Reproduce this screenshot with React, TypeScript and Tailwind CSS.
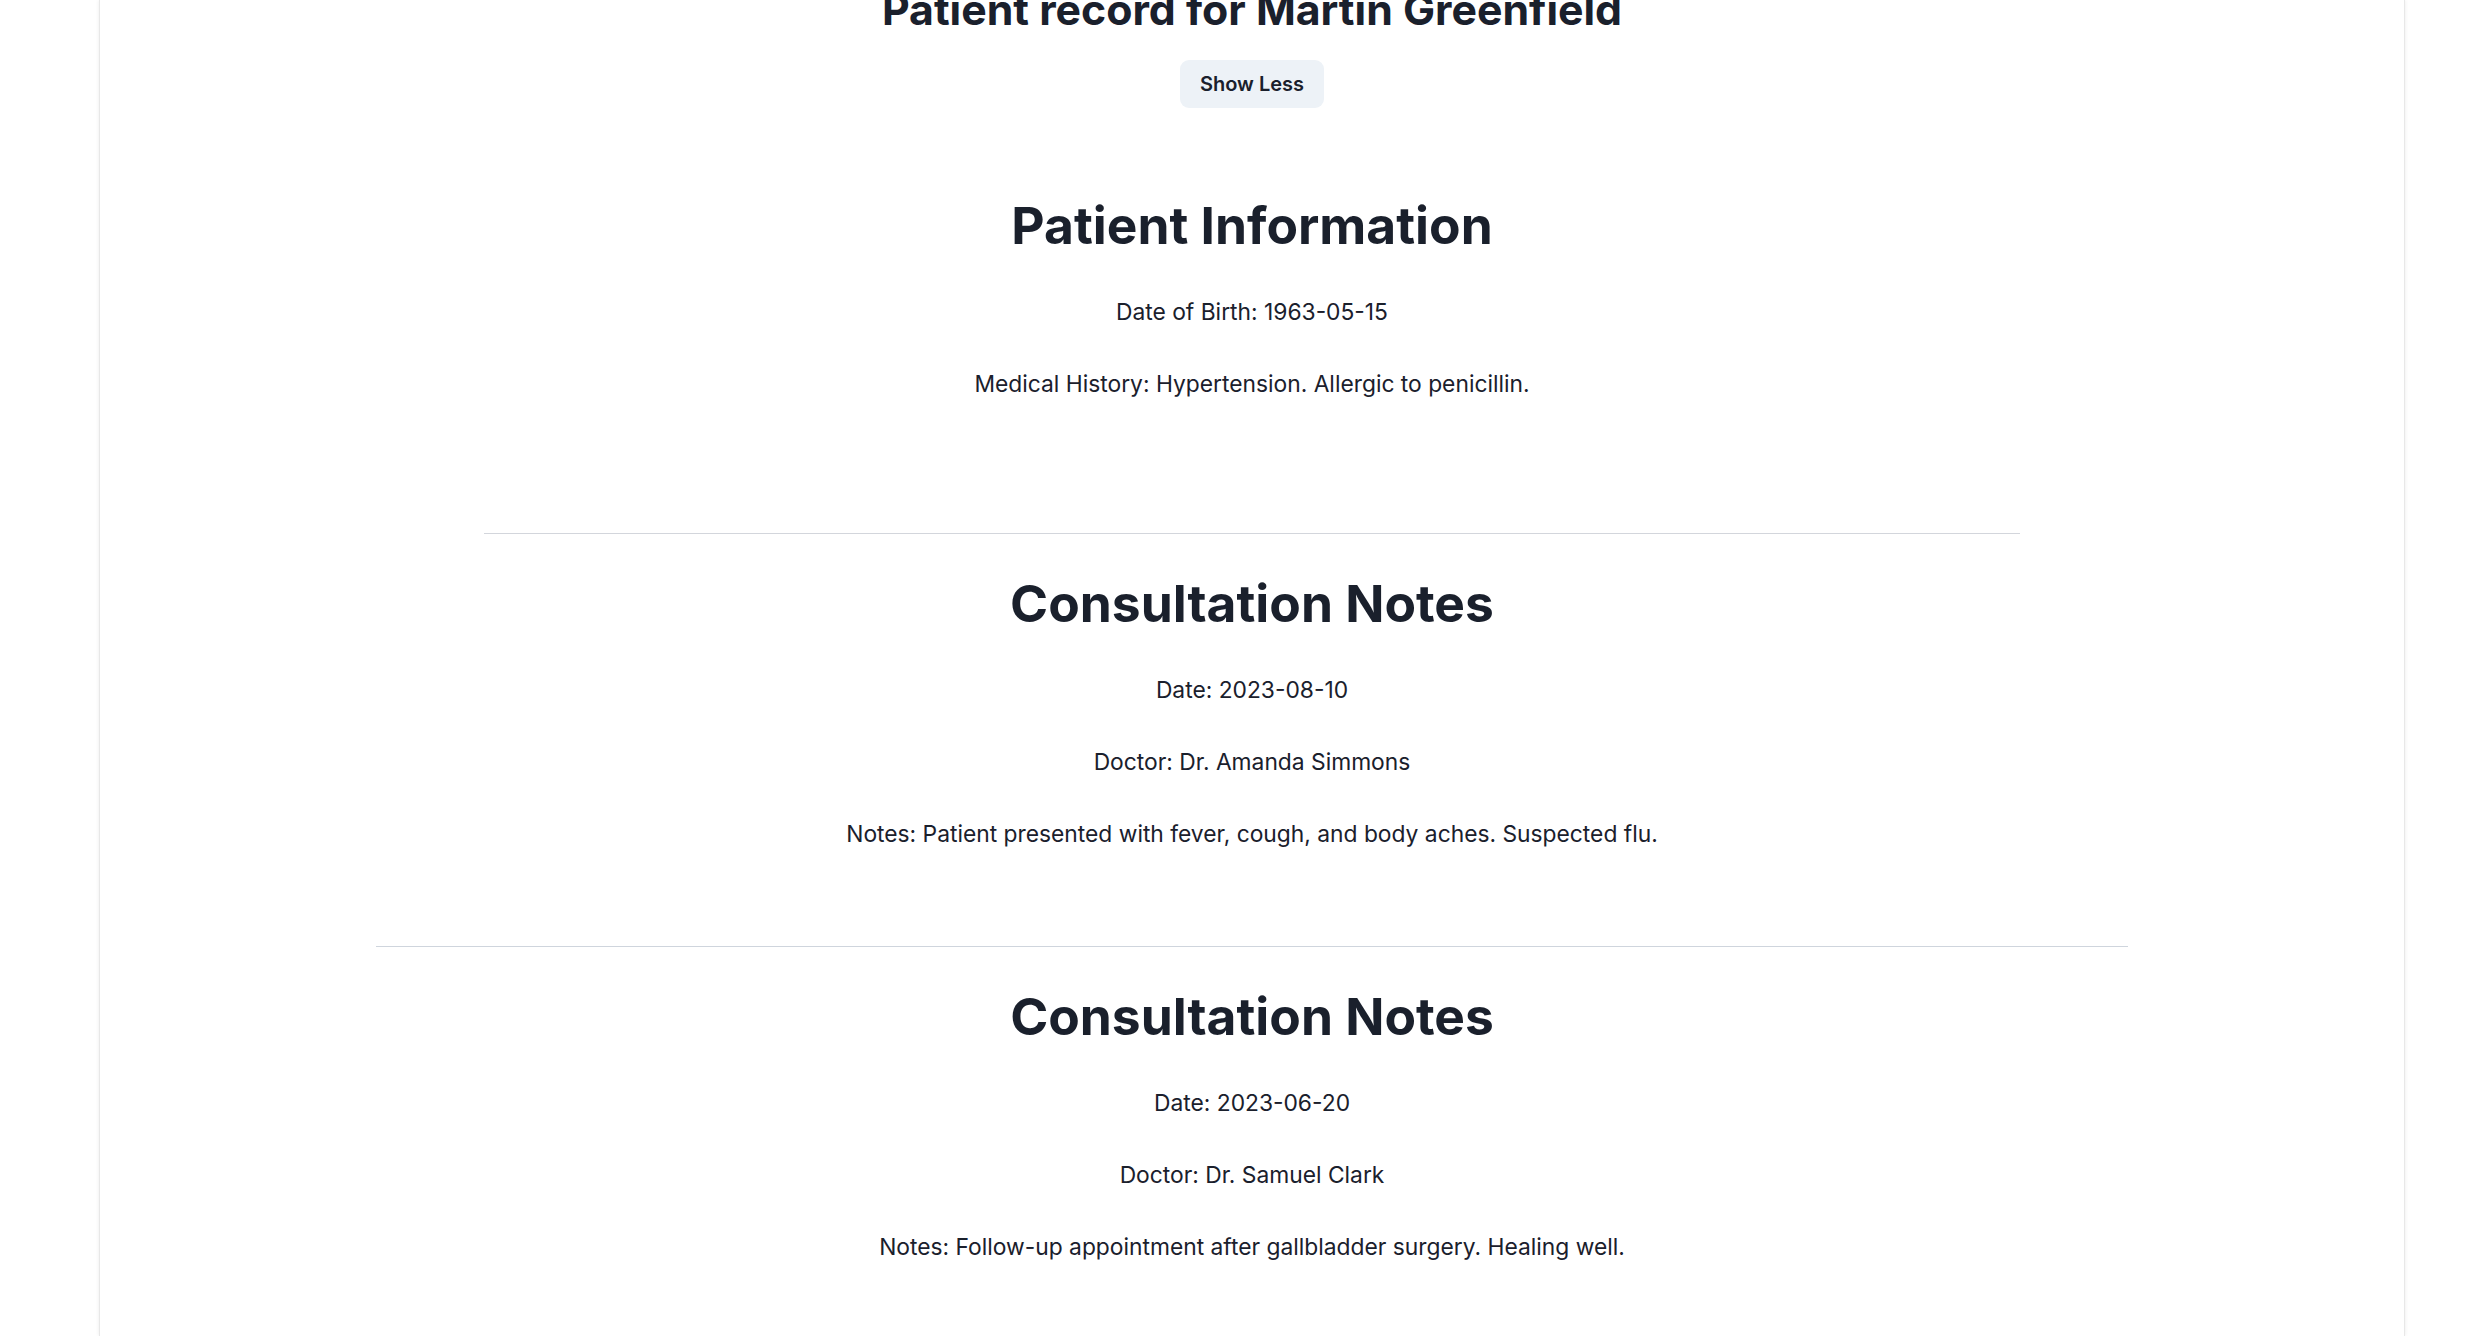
import { useState } from "react";

type Consultation = {
  date: string;
  doctor: string;
  notes: string;
};

const patient = {
  name: "Martin Greenfield",
  dateOfBirth: "1963-05-15",
  medicalHistory: "Hypertension. Allergic to penicillin.",
};

const consultations: Consultation[] = [
  {
    date: "2023-08-10",
    doctor: "Dr. Amanda Simmons",
    notes: "Patient presented with fever, cough, and body aches. Suspected flu.",
  },
  {
    date: "2023-06-20",
    doctor: "Dr. Samuel Clark",
    notes: "Follow-up appointment after gallbladder surgery. Healing well.",
  },
];

function Heading({ children }: { children: React.ReactNode }) {
  return (
    <h2 className="text-[51.5px] leading-[65px] font-bold text-[#1a202c]">
      {children}
    </h2>
  );
}

function Line({ children }: { children: React.ReactNode }) {
  return <p className="text-[22.8px] leading-[36px] text-[#1a202c]">{children}</p>;
}

function ConsultationSection({ item }: { item: Consultation }) {
  return (
    <section className="mt-[37px] flex flex-col items-center gap-[36px]">
      <Heading>Consultation Notes</Heading>
      <Line>Date: {item.date}</Line>
      <Line>Doctor: {item.doctor}</Line>
      <Line>Notes: {item.notes}</Line>
    </section>
  );
}

export default function App() {
  const [expanded, setExpanded] = useState(true);

  return (
    <div className="min-h-screen bg-white font-['Inter','Liberation_Sans',sans-serif] overflow-hidden">
      <div className="ml-[99px] w-[2306px] min-h-[1336px] flex flex-col bg-white border-x border-[#e8e8e8] shadow-[0_0_4px_rgba(0,0,0,0.08)]">
        <div className="-mt-[17px] flex flex-col items-center text-center">
          <h1 className="text-[42.8px] leading-[54px] font-bold text-[#1a202c]">
            Patient record for {patient.name}
          </h1>

          <button
            onClick={() => setExpanded(!expanded)}
            className="mt-[23px] h-[48px] px-[20px] rounded-[9px] bg-[#edf2f7] text-[20px] font-semibold text-[#1a202c]"
          >
            {expanded ? "Show Less" : "Show More"}
          </button>

          {/* Patient info */}
          <section className="mt-[85px] flex flex-col items-center gap-[36px]">
            <Heading>Patient Information</Heading>
            <Line>Date of Birth: {patient.dateOfBirth}</Line>
            <Line>Medical History: {patient.medicalHistory}</Line>
          </section>

          {expanded && (
            <>
              <hr className="mt-[131px] w-[1536px] border-0 border-t border-[#d3d6dc]" />
              <ConsultationSection item={consultations[0]} />

              <hr className="mt-[94px] w-[1752px] border-0 border-t border-[#cfd5dd]" />
              <ConsultationSection item={consultations[1]} />
            </>
          )}
        </div>
      </div>
    </div>
  );
}
